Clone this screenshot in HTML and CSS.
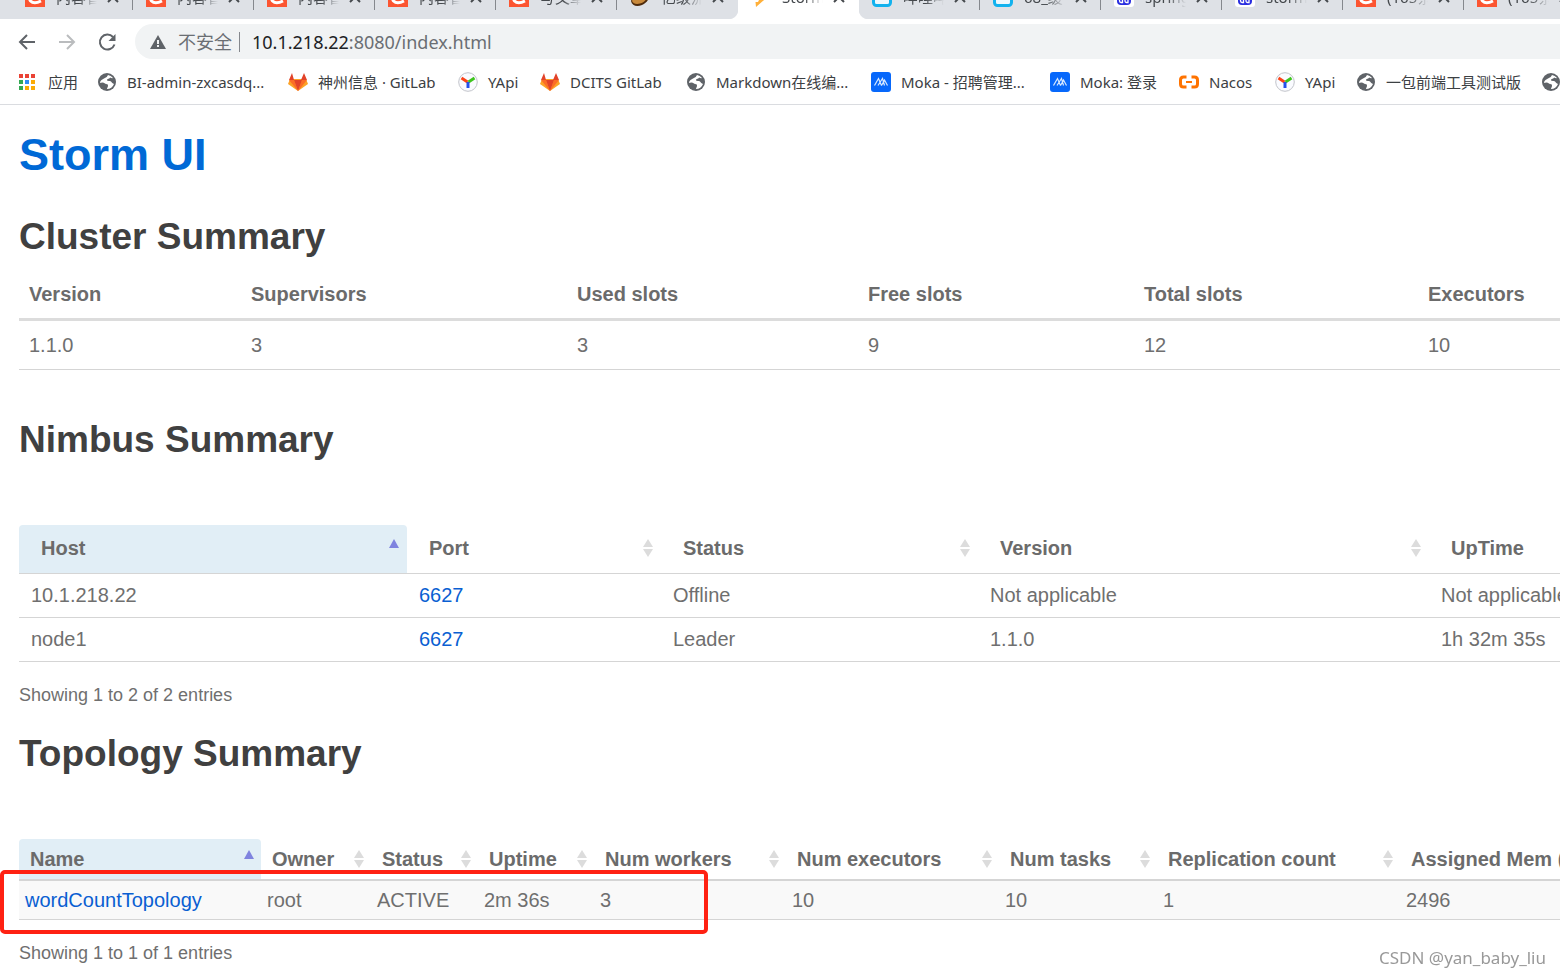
FILE: index.html
```html
<!DOCTYPE html>
<html lang="zh-CN">
<head>
<meta charset="utf-8">
<title>Storm UI</title>
<link rel="stylesheet" href="styles.css">
</head>
<body>
<svg class="sprite" aria-hidden="true">
  <symbol id="csdn" viewBox="0 0 20 20"><path fill="#fc5531" d="M0 0h20v20H0z"/><path fill="none" stroke="#fff" stroke-width="3" d="M15.500 7Q12 4 8 6Q3 10 5.500 14Q9 17.500 16 14"/></symbol>
  <symbol id="bean" viewBox="0 0 20 20"><path fill="#4f2b0c" d="M1 14C4 5 13 0 18 3c3 5 1 12-6 15C7 20 2 19 1 14z"/><path fill="#c98a3c" d="M2 14C4 6 12 2 17 4c2 5-1 11-7 12.500-4 1-7 0-8-2.500z"/></symbol>
  <symbol id="bolt" viewBox="0 0 20 20"><path fill="#ffb03a" d="M13 1 4 11h5l-2 4H4.500L5 20l11-9.500h-5l4-4z"/></symbol>
  <symbol id="tv" viewBox="0 0 20 20"><rect x="1.500" y="4" width="17" height="14.500" rx="3" fill="#eef8fd" stroke="#12b2ee" stroke-width="3"/><path stroke="#12b2ee" stroke-width="2" d="m5 0 3 3m7-3-3 3"/></symbol>
  <symbol id="baidu" viewBox="0 0 20 20"><rect width="20" height="20" rx="3" fill="#fff"/><rect x="3" y="7" width="14" height="11" rx="4" fill="#2a2ee0"/><path fill="none" stroke="#fff" stroke-width="1.300" d="M8.500 9v6.500H7a1.500 1.800 0 1 1 1.500-2M11 12v2q0 1.500 1.500 1.500H14V12"/></symbol>
  <symbol id="close" viewBox="0 0 12 12"><path stroke="#45494d" stroke-width="2" d="m1 1 10 10M11 1 1 11"/></symbol>
  <symbol id="globe" viewBox="0 0 20 20"><circle cx="10" cy="10" r="9" fill="#5f6368"/><path fill="#fff" d="M11 3q-1 3-4 3.500L4.500 8Q3 9 3 11q3-1 5 .5c1 1 3 0 3 2s-1 2-1 3.500q5 0 7-5-2-1-3-2.500c-1-1-4 0-4-1.500s3-1 3-2.500q2 1 3 .5Q14 3.500 11 3z"/></symbol>
  <symbol id="gitlab" viewBox="0 0 20 20"><path fill="#fca326" d="m2 7-2 5 10 7 10-7-2-5z"/><path fill="#fc6d26" d="M1 8h5l4 11zM19 8h-5l-4 11z"/><path fill="#e24329" d="M6 8h8l-4 11zM4 1 1 8h5zM16 1l-3 7h6z"/></symbol>
  <symbol id="yapi" viewBox="0 0 20 20"><circle cx="10" cy="10" r="9.300" fill="#fafbff" stroke="#c2c4ca"/><path stroke="#fb4318" stroke-width="3" d="m3.500 6 6 4"/><path stroke="#3fc51e" stroke-width="3" d="m16.500 6-6 4"/><path stroke="#2450ea" stroke-width="3" d="M10 10v6"/></symbol>
  <symbol id="moka" viewBox="0 0 20 20"><rect width="20" height="20" rx="3" fill="#0768fb"/><path fill="none" stroke="#d9e9ff" stroke-width="1.200" d="M3.500 13.500 7.500 6.500l3 7M7 13.500l4.500-7 2 7M10.500 13.500l2-3.500 1-2 3 5.500"/></symbol>
  <symbol id="nacos" viewBox="0 0 20 20"><path fill="none" stroke="#ff7300" stroke-width="3" d="M7.500 5H4.500Q1.500 5 1.500 8v4q0 3 3 3h3M12.500 5h3q3 0 3 3v4q0 3-3 3h-3"/><path stroke="#ff7300" stroke-width="2" d="M7 10h6"/></symbol>
  <symbol id="both" viewBox="0 0 12 20"><path fill="#dcdcdc" d="m6 1 5 8H1zM6 19l5-8H1z"/></symbol>
  <symbol id="asc" viewBox="0 0 12 20"><path fill="#7f83df" d="m6 1 5 9H1z"/></symbol>
</svg>

<header class="browser">
  <nav class="tabs" aria-label="Tabs">
    <div class="tab"><svg class="icon"><use href="#csdn"/></svg><span class="title">内容管理</span><button class="close" aria-label="Close"><svg><use href="#close"/></svg></button></div>
    <div class="tab"><svg class="icon"><use href="#csdn"/></svg><span class="title">内容管理</span><button class="close" aria-label="Close"><svg><use href="#close"/></svg></button></div>
    <div class="tab"><svg class="icon"><use href="#csdn"/></svg><span class="title">内容管理</span><button class="close" aria-label="Close"><svg><use href="#close"/></svg></button></div>
    <div class="tab"><svg class="icon"><use href="#csdn"/></svg><span class="title">内容管理</span><button class="close" aria-label="Close"><svg><use href="#close"/></svg></button></div>
    <div class="tab"><svg class="icon"><use href="#csdn"/></svg><span class="title">写文章</span><button class="close" aria-label="Close"><svg><use href="#close"/></svg></button></div>
    <div class="tab before-active"><svg class="icon"><use href="#bean"/></svg><span class="title">亿级流量</span><button class="close" aria-label="Close"><svg><use href="#close"/></svg></button></div>
    <div class="tab active"><svg class="icon"><use href="#bolt"/></svg><span class="title">Storm UI</span><button class="close" aria-label="Close"><svg><use href="#close"/></svg></button></div>
    <div class="tab after-active"><svg class="icon"><use href="#tv"/></svg><span class="title">哔哩哔哩</span><button class="close" aria-label="Close"><svg><use href="#close"/></svg></button></div>
    <div class="tab"><svg class="icon"><use href="#tv"/></svg><span class="title">68_缓存</span><button class="close" aria-label="Close"><svg><use href="#close"/></svg></button></div>
    <div class="tab"><svg class="icon"><use href="#baidu"/></svg><span class="title">springboot</span><button class="close" aria-label="Close"><svg><use href="#close"/></svg></button></div>
    <div class="tab"><svg class="icon"><use href="#baidu"/></svg><span class="title">storm ui</span><button class="close" aria-label="Close"><svg><use href="#close"/></svg></button></div>
    <div class="tab"><svg class="icon"><use href="#csdn"/></svg><span class="title">(165条消息)</span><button class="close" aria-label="Close"><svg><use href="#close"/></svg></button></div>
    <div class="tab"><svg class="icon"><use href="#csdn"/></svg><span class="title">(165条消息)</span><button class="close" aria-label="Close"><svg><use href="#close"/></svg></button></div>
  </nav>
  <div class="toolbar">
    <button class="tool" aria-label="Back"><svg viewBox="0 0 20 20"><path d="M18 10H3M10 3l-7 7 7 7"/></svg></button>
    <button class="tool disabled" aria-label="Forward" disabled><svg viewBox="0 0 20 20"><path d="M2 10h15M10 3l7 7-7 7"/></svg></button>
    <button class="tool" aria-label="Reload"><svg viewBox="0 0 20 20"><path d="M16 5a7.500 7.500 0 1 0 1.500 7.500"/><path class="solid" d="M18.500 2v7h-7z"/></svg></button>
    <div class="omnibox">
      <svg class="warn" viewBox="0 0 16 16"><path fill="#5f6368" d="M8 1 0 15h16z"/><path stroke="#f1f3f4" stroke-width="2" d="M8 6v4m0 1v2"/></svg>
      <span class="insecure">不安全</span>
      <span class="divider"></span>
      <span class="url" role="textbox" aria-label="Address"><b>10.1.218.22</b>:8080/index.html</span>
    </div>
  </div>
  <nav class="bookmarks" aria-label="Bookmarks">
    <a href="#"><svg class="icon" viewBox="0 0 20 20"><path fill="#ea4335" d="M1 2h4v4H1zM7 2h4v4H7zM13 2h4v4h-4z"/><path fill="#34a853" d="M1 8h4v4H1zM1 14h4v4H1z"/><path fill="#2f8cf5" d="M7 8h4v4H7z"/><path fill="#fbab05" d="M13 8h4v4h-4zM7 14h4v4H7zM13 14h4v4h-4z"/></svg>应用</a>
    <a href="#"><svg class="icon"><use href="#globe"/></svg>BI-admin-zxcasdq...</a>
    <a href="#"><svg class="icon"><use href="#gitlab"/></svg>神州信息 · GitLab</a>
    <a href="#"><svg class="icon"><use href="#yapi"/></svg>YApi</a>
    <a href="#"><svg class="icon"><use href="#gitlab"/></svg>DCITS GitLab</a>
    <a href="#"><svg class="icon"><use href="#globe"/></svg>Markdown在线编...</a>
    <a href="#"><svg class="icon"><use href="#moka"/></svg>Moka - 招聘管理...</a>
    <a href="#"><svg class="icon"><use href="#moka"/></svg>Moka: 登录</a>
    <a href="#"><svg class="icon"><use href="#nacos"/></svg>Nacos</a>
    <a href="#"><svg class="icon"><use href="#yapi"/></svg>YApi</a>
    <a href="#"><svg class="icon"><use href="#globe"/></svg>一包前端工具测试版</a>
    <a href="#" aria-label="Bookmark"><svg class="icon"><use href="#globe"/></svg></a>
  </nav>
</header>

<main class="page">
  <h1><a href="#">Storm UI</a></h1>

  <section class="cluster">
    <h2>Cluster Summary</h2>
    <table>
      <colgroup><col class="w222"><col class="w326"><col class="w291"><col class="w276"><col class="w284"><col></colgroup>
      <thead><tr><th>Version</th><th>Supervisors</th><th>Used slots</th><th>Free slots</th><th>Total slots</th><th>Executors</th></tr></thead>
      <tbody><tr><td>1.1.0</td><td>3</td><td>3</td><td>9</td><td>12</td><td>10</td></tr></tbody>
    </table>
  </section>

  <section class="nimbus">
    <h2>Nimbus Summary</h2>
    <table>
      <colgroup><col class="w388"><col class="w254"><col class="w317"><col class="w451"><col></colgroup>
      <thead><tr>
        <th class="sorted"><button>Host<svg><use href="#asc"/></svg></button></th>
        <th><button>Port<svg><use href="#both"/></svg></button></th>
        <th><button>Status<svg><use href="#both"/></svg></button></th>
        <th><button>Version<svg><use href="#both"/></svg></button></th>
        <th><button>UpTime</button></th>
      </tr></thead>
      <tbody>
        <tr><td>10.1.218.22</td><td><a href="#">6627</a></td><td>Offline</td><td>Not applicable</td><td>Not applicable</td></tr>
        <tr><td>node1</td><td><a href="#">6627</a></td><td>Leader</td><td>1.1.0</td><td>1h 32m 35s</td></tr>
      </tbody>
    </table>
    <p class="info">Showing 1 to 2 of 2 entries</p>
  </section>

  <section class="topology">
    <h2>Topology Summary</h2>
    <div class="marked">
      <table>
        <colgroup><col class="w242"><col class="w110"><col class="w107"><col class="w116"><col class="w192"><col class="w213"><col class="w158"><col class="w243"><col></colgroup>
        <thead><tr>
          <th class="sorted"><button>Name<svg><use href="#asc"/></svg></button></th>
          <th><button>Owner<svg><use href="#both"/></svg></button></th>
          <th><button>Status<svg><use href="#both"/></svg></button></th>
          <th><button>Uptime<svg><use href="#both"/></svg></button></th>
          <th><button>Num workers<svg><use href="#both"/></svg></button></th>
          <th><button>Num executors<svg><use href="#both"/></svg></button></th>
          <th><button>Num tasks<svg><use href="#both"/></svg></button></th>
          <th><button>Replication count<svg><use href="#both"/></svg></button></th>
          <th><button>Assigned Mem (MB)</button></th>
        </tr></thead>
        <tbody><tr><td><a href="#">wordCountTopology</a></td><td>root</td><td>ACTIVE</td><td>2m 36s</td><td>3</td><td>10</td><td>10</td><td>1</td><td>2496</td></tr></tbody>
      </table>
      <div class="highlight"></div>
    </div>
    <p class="info">Showing 1 to 1 of 1 entries</p>
  </section>
  <div class="watermark">CSDN @yan_baby_liu</div>
</main>
</body>
</html>
```
FILE: styles.css
```css
* { box-sizing: border-box; }

body {
  margin: 0;
  overflow: hidden;
  background: #fff;
  color: #6f6f6f;
  font-family: "Liberation Sans", Arial, sans-serif;
  font-size: 20px;
  line-height: 24px;
}

a { color: #0a5fd2; text-decoration: none; }
button { border: 0; padding: 0; background: none; color: inherit; font: inherit; }
.sprite { display: none; }

/* Browser chrome */
.browser { font-family: "Noto Sans", "Noto Sans CJK SC", sans-serif; }

.tabs {
  display: flex;
  align-items: flex-end;
  height: 19px;
  padding-left: 12px;
  overflow: hidden;
  background: #dee1e6;
}
.tab {
  position: relative;
  display: flex;
  flex: none;
  align-items: center;
  width: 121px;
  height: 44px;
  padding-left: 13px;
  color: #45494d;
  font-size: 15px;
}
.tab::after {
  content: "";
  position: absolute;
  right: 0;
  bottom: 9px;
  width: 1px;
  height: 26px;
  background: #85888d;
}
.tab.active::after, .tab.before-active::after { display: none; }
.tab.active { background: #fff; }
.before-active { background: radial-gradient(circle at 0 0, #dee1e6 10px, #fff 11px) right bottom / 10px 10px no-repeat; }
.after-active { background: radial-gradient(circle at 100% 0, #dee1e6 10px, #fff 11px) left bottom / 10px 10px no-repeat; }
.icon { flex: none; width: 20px; height: 20px; }
.title {
  width: 41px;
  margin-left: 11px;
  overflow: hidden;
  white-space: nowrap;
  mask-image: linear-gradient(90deg, #000 55%, transparent);
}
.close { display: flex; margin-left: 10px; }
.close svg { width: 12px; height: 12px; }

.toolbar {
  display: flex;
  align-items: center;
  gap: 20px;
  height: 45px;
  padding-left: 17px;
}
.tool { display: flex; }
.tool svg { width: 20px; height: 20px; fill: none; stroke: #5f6368; stroke-width: 2; }
.tool .solid { fill: #5f6368; stroke: none; }
.tool.disabled svg { stroke: #babcbe; }
.omnibox {
  display: flex;
  flex: 1;
  align-items: center;
  height: 35px;
  margin: 0 -20px 0 -2px;
  padding-left: 15px;
  border-radius: 18px;
  background: #f1f3f4;
  color: #6a6e73;
  font-size: 18px;
}
.warn { width: 16px; height: 16px; }
.insecure { margin-left: 12px; }
.divider { width: 1px; height: 20px; margin: 0 12px 0 7px; background: #85888d; }
.url b { color: #202124; font-weight: 400; }

.bookmarks {
  display: grid;
  grid-template-columns: 79px 191px 170px 82px 146px 185px 179px 129px 96px 81px 185px 20px;
  align-items: center;
  height: 41px;
  padding: 0 0 4px 18px;
  border-bottom: 1px solid #dadce0;
  overflow: hidden;
  font-size: 15px;
}
.bookmarks a {
  display: flex;
  align-items: center;
  gap: 10px;
  color: #3c4043;
  white-space: nowrap;
}

/* Storm page */
.page { padding: 25px 0 0 19px; }
h1, h2, p { margin: 0; }
h1 { font-size: 45px; line-height: 50px; }
h1 a { color: #0069d6; }
h2 { color: #404040; font-size: 37px; line-height: 42px; }

table { width: 100%; table-layout: fixed; border-spacing: 0; }
th, td { padding: 0; text-align: left; white-space: nowrap; }
th { color: #6b6b6b; }
td { border-bottom: 1px solid #d5d5d5; }
th button { display: flex; align-items: center; justify-content: space-between; width: 100%; }
th svg { flex: none; width: 12px; height: 20px; }
.sorted { border-radius: 4px 4px 0 0; background: #e1eef6; }

.cluster { margin-top: 36px; }
.cluster table { margin-top: 12px; }
.cluster th, .cluster td { padding: 12px 10px; }
.cluster th { border-bottom: 3px solid #dcdcdc; }

.nimbus { margin-top: 49px; }
.nimbus table, .marked { margin-top: 64px; }
.nimbus th { padding: 11px 7px 13px 22px; border-bottom: 1px solid #d5d5d5; }
.nimbus td { padding: 9px 12px 10px; }

.topology { margin-top: 26px; }
.topology th { padding: 8px 6px 8px 11px; border-bottom: 2px solid #d5d5d5; }
.topology td { padding: 7px 6px; background: #f9f9f9; }

.info { margin-top: 21px; font-size: 18px; }

.marked { position: relative; }
.highlight {
  position: absolute;
  top: 31px;
  left: -19px;
  width: 708px;
  height: 64px;
  border: 4px solid #ff2112;
  border-radius: 5px;
}
.watermark {
  position: fixed;
  right: 14px;
  bottom: 7px;
  color: #999;
  font-family: "Noto Sans", sans-serif;
  font-size: 17px;
  text-shadow: 1px 1px 0 #fff;
}

.w107 { width: 107px; }
.w110 { width: 110px; }
.w116 { width: 116px; }
.w158 { width: 158px; }
.w192 { width: 192px; }
.w213 { width: 213px; }
.w222 { width: 222px; }
.w242 { width: 242px; }
.w243 { width: 243px; }
.w254 { width: 254px; }
.w276 { width: 276px; }
.w284 { width: 284px; }
.w291 { width: 291px; }
.w317 { width: 317px; }
.w326 { width: 326px; }
.w388 { width: 388px; }
.w451 { width: 451px; }
```
